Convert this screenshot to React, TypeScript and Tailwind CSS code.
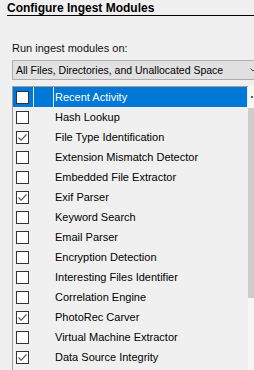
import * as React from "react";

const modules: { name: string; checked: boolean }[] = [
  { name: "Recent Activity", checked: false },
  { name: "Hash Lookup", checked: false },
  { name: "File Type Identification", checked: true },
  { name: "Extension Mismatch Detector", checked: false },
  { name: "Embedded File Extractor", checked: false },
  { name: "Exif Parser", checked: true },
  { name: "Keyword Search", checked: false },
  { name: "Email Parser", checked: false },
  { name: "Encryption Detection", checked: false },
  { name: "Interesting Files Identifier", checked: false },
  { name: "Correlation Engine", checked: false },
  { name: "PhotoRec Carver", checked: true },
  { name: "Virtual Machine Extractor", checked: false },
  { name: "Data Source Integrity", checked: true },
];

const CheckBox = ({ checked }: { checked: boolean }) => (
  <span className="w-[13px] h-[13px] border border-[#333333] bg-white flex items-center justify-center">
    {checked && (
      <svg width="11" height="11" viewBox="0 0 11 11">
        <path d="M1.5 5.5 L4.2 8.2 L9.5 2.5" fill="none" stroke="#5a5a5a" strokeWidth="1.2" />
      </svg>
    )}
  </span>
);

const Row = ({ name, checked, selected }: { name: string; checked: boolean; selected: boolean }) => (
  <div className={`flex h-[20px] items-center ${selected ? "bg-[#0078d7] text-white" : "text-black"}`}>
    <div className={`w-[21px] h-full flex items-center pl-[3px] ${selected ? "border-r border-[#e8e8e8]" : ""}`}>
      <CheckBox checked={checked} />
    </div>
    <div className={`w-[20px] h-full ${selected ? "border-r border-[#e8e8e8]" : ""}`} />
    <span className="pl-[1px] whitespace-nowrap">{name}</span>
  </div>
);

export default function App() {
  return (
    <div
      className="w-[254px] h-[370px] bg-[#f0f0f0] overflow-hidden text-[11px] leading-[14px]"
      style={{ fontFamily: '"Liberation Sans", Arial, sans-serif' }}
    >
      <div className="ml-[7px] h-[16px] border-b border-black pt-[2px]">
        <div className="font-bold text-[12px] leading-[13px]">Configure Ingest Modules</div>
      </div>
      <div className="ml-[12px] mt-[25px] text-[#111]">Run ingest modules on:</div>
      <div className="ml-[12px] mt-[5px] w-[250px] h-[20px] bg-[#e1e1e1] border border-[#adadad] flex items-center pl-[3px] relative text-[10.5px]">
        <span className="whitespace-nowrap">All Files, Directories, and Unallocated Space</span>
        <svg className="absolute left-[237px] top-[7px]" width="6" height="4" viewBox="0 0 6 4">
          <path d="M0.5 0.5 L3 3 L5.5 0.5" fill="none" stroke="#444" strokeWidth="1" />
        </svg>
      </div>
      <div className="ml-[12px] mt-[6px] flex h-[300px]">
        <div className="flex-1 border-l border-t border-[#a0a0a0] pr-[1px]">
          {modules.map((m, i) => (
            <Row key={m.name} name={m.name} checked={m.checked} selected={i === 0} />
          ))}
        </div>
        <div className="w-[6px] flex flex-col bg-[#f7f7f7]">
          <div className="h-[22px] flex justify-end pr-[1px] pt-[10px]">
            <span className="w-[2px] h-[2px] bg-[#606060]" />
          </div>
          <div className="h-[190px] bg-[#cdcdcd]" />
          <div className="flex-1 flex flex-col justify-end items-end pr-[1px] pb-[9px]">
            <span className="w-[2px] h-[3px] bg-[#606060]" />
          </div>
        </div>
      </div>
    </div>
  );
}
